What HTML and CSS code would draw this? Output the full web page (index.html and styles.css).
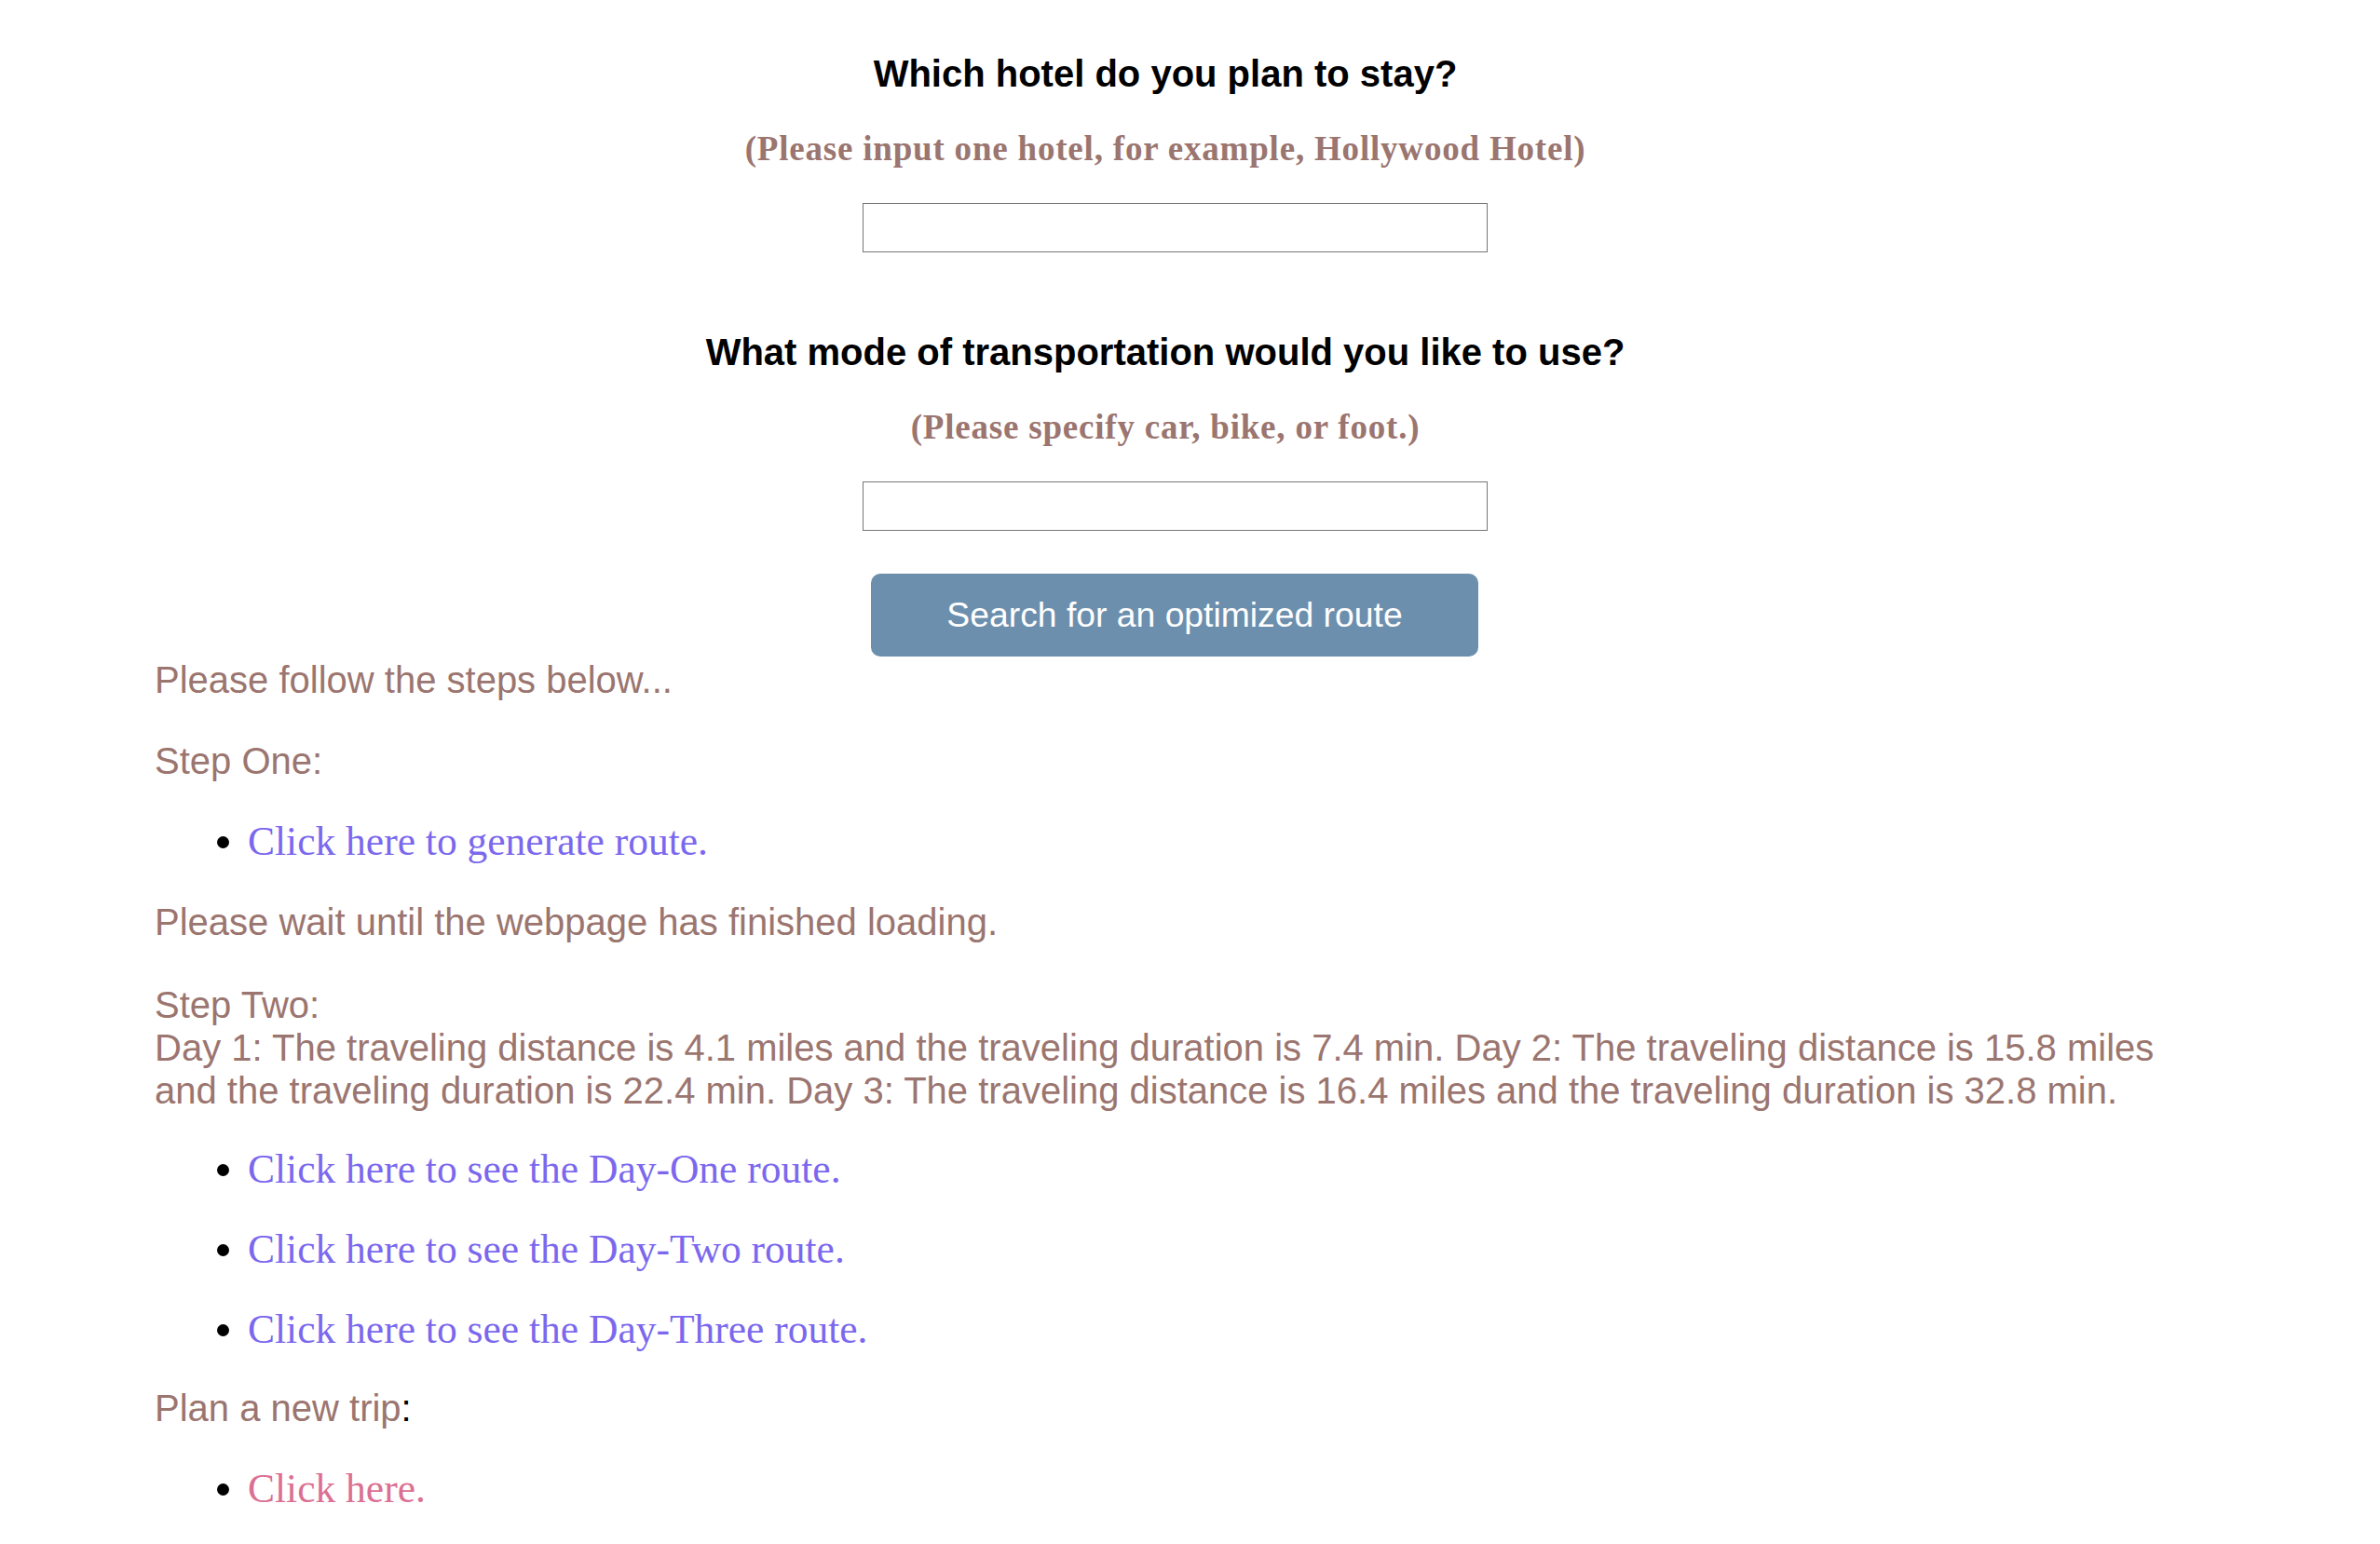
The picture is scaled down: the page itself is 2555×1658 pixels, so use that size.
FILE: index.html
```html
<!DOCTYPE html>
<html lang="en">
<head>
<meta charset="utf-8">
<title>Route Planner</title>
<link rel="stylesheet" href="styles.css">
</head>
<body>
<main class="page">
  <section class="form">
    <h2 class="question">Which hotel do you plan to stay?</h2>
    <p class="hint">(Please input one hotel, for example, Hollywood Hotel)</p>
    <div class="field-row first-field"><input class="field" type="text"></div>

    <h2 class="question q2">What mode of transportation would you like to use?</h2>
    <p class="hint">(Please specify car, bike, or foot.)</p>
    <div class="field-row second-field"><input class="field" type="text"></div>

    <div class="field-row btn-row"><button class="search-btn" type="button">Search for an optimized route</button></div>
  </section>

  <section class="steps">
    <p class="text first">Please follow the steps below...</p>
    <p class="text">Step One:</p>
    <ul class="links"><li><a class="link" href="#">Click here to generate route.</a></li></ul>
    <p class="text">Please wait until the webpage has finished loading.</p>
    <p class="text step-two">Step Two:<br>Day 1: The traveling distance is 4.1 miles and the traveling duration is 7.4 min. Day 2: The traveling distance is 15.8 miles and the traveling duration is 22.4 min. Day 3: The traveling distance is 16.4 miles and the traveling duration is 32.8 min.</p>
    <ul class="links tight"><li><a class="link" href="#">Click here to see the Day-One route.</a></li></ul>
    <ul class="links"><li><a class="link" href="#">Click here to see the Day-Two route.</a></li></ul>
    <ul class="links"><li><a class="link" href="#">Click here to see the Day-Three route.</a></li></ul>
    <p class="text tight"><span class="brown">Plan a new trip</span><span class="black">:</span></p>
    <ul class="links"><li><a class="link pink" href="#">Click here.</a></li></ul>
  </section>
</main>
</body>
</html>
```

FILE: styles.css
```css
html, body {
  margin: 0;
  padding: 0;
  background: #ffffff;
}

.page {
  width: 2170px;
  margin-left: 166px;
  padding-top: 56px;
  font-family: "Liberation Sans", Arial, sans-serif;
}

.form {
  text-align: center;
}

.question {
  margin: 0;
  font-size: 40px;
  line-height: 46px;
  font-weight: bold;
  color: #000000;
}

.q2 {
  margin-top: 84px;
}

.hint {
  margin: 40px 0 0;
  font-family: "Liberation Serif", Georgia, serif;
  font-weight: bold;
  font-size: 37px;
  letter-spacing: 0.8px;
  line-height: 36px;
  color: #9b756f;
}

.field-row {
  display: flex;
  justify-content: center;
  padding-left: 20px;
}

.first-field {
  margin-top: 40px;
}

.second-field {
  margin-top: 40px;
}

.field {
  width: 671px;
  height: 53px;
  box-sizing: border-box;
  border: 1px solid #767676;
  border-radius: 0;
  padding: 0 4px;
  background: #ffffff;
  font-size: 30px;
}

.btn-row {
  margin-top: 46px;
}

.search-btn {
  width: 652px;
  height: 89px;
  border: none;
  border-radius: 10px;
  background: #6d8fae;
  color: #ffffff;
  font-family: "Liberation Sans", Arial, sans-serif;
  font-size: 37.3px;
  padding: 0;
}

.steps {
  padding-top: 2px;
}

.text {
  margin: 41px 0 0;
  font-size: 40px;
  line-height: 46px;
  color: #9b756f;
}

.text.first {
  margin-top: 0;
}

.text.step-two {
  margin-top: 43px;
}

.brown {
  color: #9b756f;
}

.black {
  color: #000000;
}

.links {
  margin: 41px 0 0;
  padding-left: 100px;
  font-family: "Liberation Serif", Georgia, serif;
  font-size: 43.5px;
  line-height: 45px;
  color: #000000;
}

.links.tight,
.text.tight {
  margin-top: 39px;
}

.link {
  color: #7b68ee;
  text-decoration: none;
}

.link.pink {
  color: #db7093;
}
```
